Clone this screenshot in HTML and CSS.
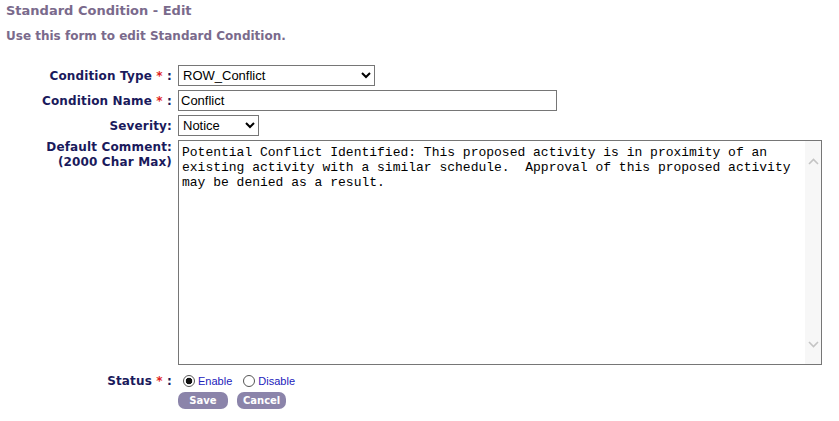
FILE: index.html
```html
<!DOCTYPE html>
<html lang="en">
<head>
    <meta charset="UTF-8">
    <title>Standard Condition - Edit</title>
    <link rel="stylesheet" href="styles.css">
</head>
<body>
    <div class="page-title">Standard Condition - Edit</div>
    <div class="page-intro">Use this form to edit Standard Condition.</div>

    <form id="condition-form" onsubmit="return false;">
        <table class="form-table">
            <tr>
                <td class="label">Condition Type <span class="req">*</span> :</td>
                <td>
                    <select id="condition-type" class="sel-type">
                        <option>ROW_Conflict</option>
                    </select>
                </td>
            </tr>
            <tr>
                <td class="label">Condition Name <span class="req">*</span> :</td>
                <td><input type="text" id="condition-name" class="txt-name" value="Conflict"></td>
            </tr>
            <tr>
                <td class="label">Severity:</td>
                <td>
                    <select id="severity" class="sel-severity">
                        <option>Notice</option>
                    </select>
                </td>
            </tr>
            <tr>
                <td class="label top">Default Comment:<br>(2000 Char Max)</td>
                <td>
                    <div class="comment-wrap">
                        <textarea id="default-comment" class="comment">Potential Conflict Identified: This proposed activity is in proximity of an existing activity with a similar schedule.  Approval of this proposed activity may be denied as a result.</textarea>
                        <div class="fake-scroll">
                            <svg width="11" height="7" viewBox="0 0 11 7"><path d="M1 6 L5.5 1.5 L10 6" fill="none" stroke="#c4c4c4" stroke-width="1.6"/></svg>
                            <svg width="11" height="7" viewBox="0 0 11 7"><path d="M1 1 L5.5 5.5 L10 1" fill="none" stroke="#c4c4c4" stroke-width="1.6"/></svg>
                        </div>
                    </div>
                </td>
            </tr>
            <tr>
                <td class="label status-label">Status <span class="req">*</span> :</td>
                <td class="status">
                    <label><input type="radio" name="status" checked>Enable</label>
                    <label><input type="radio" name="status">Disable</label>
                </td>
            </tr>
            <tr>
                <td></td>
                <td class="buttons">
                    <button type="submit" class="btn btn-save">Save</button>
                    <button type="button" class="btn btn-cancel">Cancel</button>
                </td>
            </tr>
        </table>
    </form>
</body>
</html>
```

FILE: styles.css
```css
body {
    margin: 0;
    padding: 3px 6px;
    font-family: "DejaVu Sans", Verdana, sans-serif;
    background-color: #fff;
}
.page-title {
    color: #7a6a8c;
    font-size: 13px;
    font-weight: bold;
    height: 26px;
}
.page-intro {
    color: #7a6a8c;
    font-size: 12px;
    font-weight: bold;
    margin-bottom: 20px;
}
.form-table {
    border-collapse: collapse;
}
.form-table td {
    padding: 2px 0;
    vertical-align: middle;
}
.label {
    width: 166px;
    text-align: right;
    padding-right: 6px !important;
    color: #1a1a5c;
    font-size: 12px;
    font-weight: bold;
    letter-spacing: 0.15px;
    white-space: nowrap;
}
.label.top {
    vertical-align: top !important;
    line-height: 15px;
}
.req {
    color: #e02020;
}
select, input[type="text"] {
    font-family: "Liberation Sans", Arial, sans-serif;
    font-size: 13px;
    color: #000;
    border: 1px solid #767676;
    background-color: #fff;
    height: 21px;
    margin: 0;
    box-sizing: border-box;
}
input[type="text"] {
    padding: 1px 2px;
}
.sel-type {
    width: 197px;
}
.txt-name {
    width: 379px;
}
.sel-severity {
    width: 81px;
}
.comment-wrap {
    position: relative;
    width: 644px;
    height: 225px;
}
.comment {
    width: 644px;
    height: 225px;
    box-sizing: border-box;
    border: 1px solid #767676;
    font-family: "Liberation Mono", "Courier New", monospace;
    font-size: 13px;
    line-height: 15px;
    padding: 4px 20px 2px 3px;
    margin: 0;
    resize: none;
    overflow: hidden;
    display: block;
}
.fake-scroll {
    position: absolute;
    top: 1px;
    right: 1px;
    bottom: 1px;
    width: 16px;
    background-color: #f7f7f7;
    display: flex;
    flex-direction: column;
    justify-content: space-between;
    align-items: center;
    padding: 17px 0 16px;
    box-sizing: border-box;
}
.status-label {
    padding: 7px 6px 0 0 !important;
    line-height: 14px;
}
.status {
    padding: 7px 0 0 !important;
    line-height: 14px;
    font-family: "Liberation Sans", Arial, sans-serif;
    font-size: 11px;
    color: #2222bb;
}
.status label {
    margin-right: 3px;
}
.status input[type="radio"] {
    appearance: none;
    -webkit-appearance: none;
    margin: 0 3px 0 5px;
    width: 12px;
    height: 12px;
    border: 1px solid #555;
    border-radius: 50%;
    background-color: #fff;
    vertical-align: -2px;
    box-sizing: border-box;
}
.status input[type="radio"]:checked {
    background: radial-gradient(circle, #111 0, #111 3px, #fff 3.6px);
}
.buttons {
    padding: 4px 0 0 !important;
}
.btn-row {
    display: flex;
}
.btn {
    background-color: #8b84aa;
    color: #fff;
    border: none;
    border-radius: 7px;
    font-family: "DejaVu Sans", Verdana, sans-serif;
    font-size: 10px;
    font-weight: bold;
    height: 17px;
    padding: 0;
    margin: 0 4px 0 0;
    vertical-align: top;
    cursor: pointer;
}
.btn-save {
    width: 50px;
}
.btn-cancel {
    width: 49px;
}
```
